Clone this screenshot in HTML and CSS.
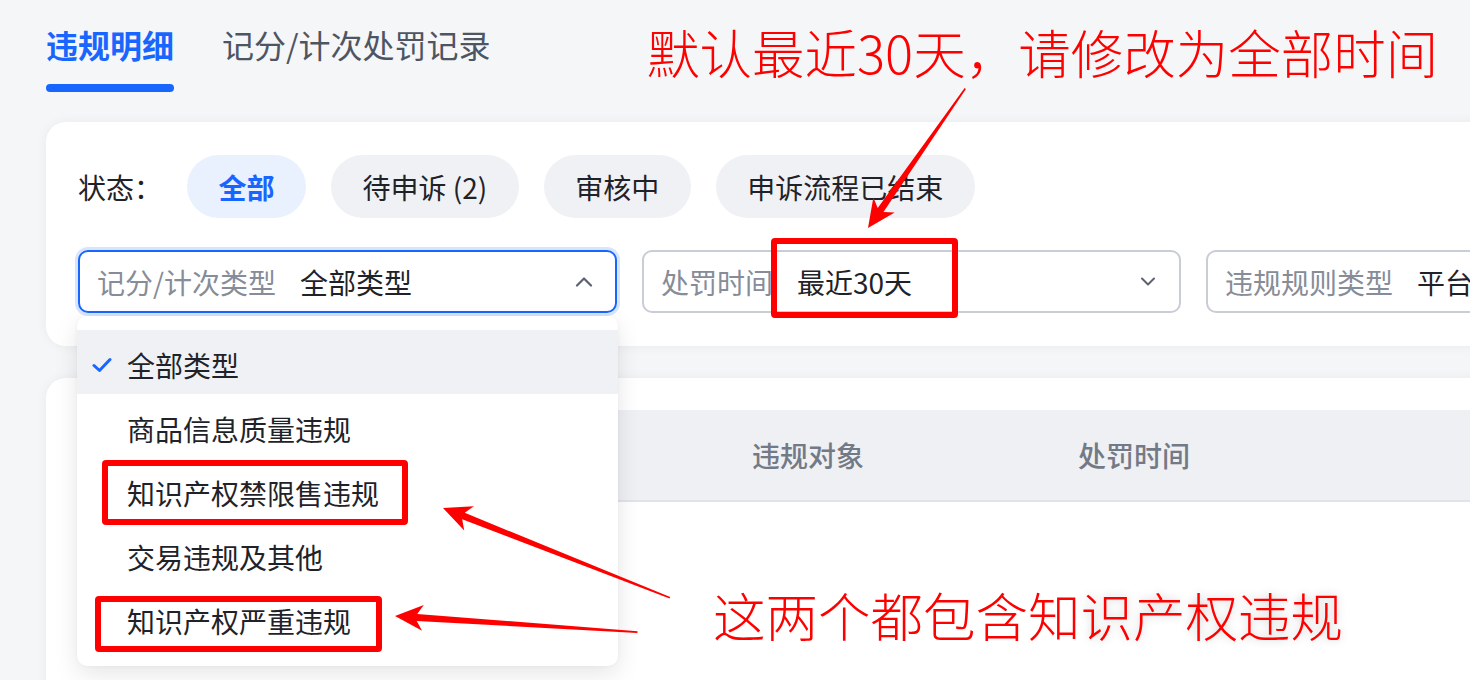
FILE: index.html
```html
<!DOCTYPE html>
<html lang="zh-CN">
<head>
<meta charset="utf-8">
<title>违规明细</title>
<link rel="stylesheet" href="styles.css">
</head>
<body>
<div class="page">
  <nav class="tabs">
    <div class="tab tab-active"><span class="tab-text">违规明细</span><span class="tab-bar"></span></div>
    <div class="tab"><span class="tab-text">记分/计次处罚记录</span></div>
  </nav>

  <section class="card filter-card">
    <div class="status-row">
      <span class="status-label">状态：</span>
      <span class="pill pill-active">全部</span>
      <span class="pill">待申诉 (2)</span>
      <span class="pill">审核中</span>
      <span class="pill">申诉流程已结束</span>
    </div>
    <div class="select-row">
      <div class="select select-open">
        <span class="select-label">记分/计次类型</span>
        <span class="select-value">全部类型</span>
        <svg class="chev" width="18" height="11" viewBox="0 0 18 11"><path d="M2 9.5 L9 2.5 L16 9.5" fill="none" stroke="#5c6270" stroke-width="2.2" stroke-linecap="round" stroke-linejoin="round"/></svg>
        <div class="dropdown">
          <div class="option option-selected"><span class="option-mark"><svg width="20" height="16" viewBox="0 0 20 16"><path d="M2 8.5 L7.5 13.5 L18 2.5" stroke="#1966ff" stroke-width="3" fill="none" stroke-linecap="round" stroke-linejoin="round"/></svg></span>全部类型</div>
          <div class="option"><span class="option-mark"></span>商品信息质量违规</div>
          <div class="option"><span class="option-mark"></span>知识产权禁限售违规</div>
          <div class="option"><span class="option-mark"></span>交易违规及其他</div>
          <div class="option"><span class="option-mark"></span>知识产权严重违规</div>
        </div>
      </div>
      <div class="select">
        <span class="select-label">处罚时间</span>
        <span class="select-value">最近30天</span>
        <svg class="chev" width="18" height="11" viewBox="0 0 18 11"><path d="M3 2.5 L9 8.5 L15 2.5" fill="none" stroke="#5c6270" stroke-width="2" stroke-linecap="round" stroke-linejoin="round"/></svg>
      </div>
      <div class="select">
        <span class="select-label">违规规则类型</span>
        <span class="select-value">平台</span>
      </div>
    </div>
  </section>

  <section class="card table-card">
    <div class="table-head">
      <span class="th"></span>
      <span class="th">违规对象</span>
      <span class="th">处罚时间</span>
    </div>
  </section>

  <div class="annotations">
    <div class="annot annot-top">默认最近30天，请修改为全部时间</div>
    <div class="annot annot-bottom">这两个都包含知<span class="annot-shadow">识产权违规</span></div>
    <div class="mark-box mark-1"></div>
    <div class="mark-box mark-2"></div>
    <div class="mark-box mark-3"></div>
    <svg class="arrows" width="1470" height="680" viewBox="0 0 1470 680">
      <g fill="#ff0000">
        <g transform="translate(868 228) rotate(124.9)"><polygon points="0,0 -28,-13 -22,-3.5 -170,-0.8 -170,0.8 -22,3.5 -28,13"/></g>
        <g transform="translate(443 508) rotate(-158.4)"><polygon points="0,0 -28,-13 -22,-3.5 -244,-0.8 -244,0.8 -22,3.5 -28,13"/></g>
        <g transform="translate(395 616) rotate(-176.2)"><polygon points="0,0 -28,-13 -22,-3.5 -243,-0.8 -243,0.8 -22,3.5 -28,13"/></g>
      </g>
    </svg>
  </div>
</div>
</body>
</html>
```

FILE: styles.css
```css
html, body {
  margin: 0;
  padding: 0;
}

body {
  background: #f5f6f8;
  font-family: "Noto Sans CJK SC", "Noto Sans", sans-serif;
  color: #1f2329;
  width: 1470px;
  height: 680px;
  overflow: hidden;
}

.page {
  position: relative;
  width: 1470px;
  height: 680px;
  overflow: hidden;
}

/* Tabs */
.tabs {
  display: flex;
  gap: 48px;
  padding: 22px 0 0 46px;
}

.tab {
  display: flex;
  flex-direction: column;
}

.tab-text {
  font-size: 32px;
  line-height: 44px;
  color: #4e5562;
  white-space: nowrap;
}

.tab-active .tab-text {
  color: #1966ff;
  font-weight: 700;
}

.tab-bar {
  height: 8px;
  margin-top: 18px;
  border-radius: 4px;
  background: #1966ff;
}

/* Cards */
.card {
  background: #ffffff;
  border-radius: 20px;
  margin-left: 46px;
  width: 1480px;
  box-shadow: 0 0 12px rgba(20, 30, 60, 0.05);
}

.filter-card {
  position: relative;
  z-index: 2;
  margin-top: 30px;
  padding: 33px 0 33px 32px;
  box-sizing: border-box;
}

.status-row {
  display: flex;
  align-items: center;
  gap: 25px;
  height: 63px;
}

.status-label {
  font-size: 28px;
  color: #1f2329;
  white-space: nowrap;
}

.pill {
  display: flex;
  align-items: center;
  height: 63px;
  padding: 0 31.5px;
  border-radius: 32px;
  background: #f0f1f4;
  font-size: 28px;
  color: #1f2329;
  white-space: nowrap;
}

.pill-active {
  background: #e9f1ff;
  color: #1966ff;
  font-weight: 700;
}

.select-row {
  display: flex;
  gap: 25px;
  margin-top: 32px;
}

.select {
  position: relative;
  flex-shrink: 0;
  display: flex;
  align-items: center;
  width: 539px;
  height: 63px;
  box-sizing: border-box;
  padding: 0 22px 0 17px;
  border: 2px solid #c9cdd5;
  border-radius: 10px;
  font-size: 28px;
  white-space: nowrap;
}

.select-open {
  border-color: #1966ff;
  box-shadow: 0 0 0 3px #d8e5ff;
}

.select-label {
  color: #868c98;
}

.select-value {
  margin-left: 24px;
  color: #1f2329;
}

.chev {
  margin-left: auto;
  flex-shrink: 0;
}

/* Dropdown */
.dropdown {
  position: absolute;
  top: 64px;
  left: -3px;
  width: 541px;
  padding: 14px 0 16px;
  background: #ffffff;
  border-radius: 10px;
  box-shadow: 0 8px 24px rgba(0, 0, 0, 0.1), 0 0 4px rgba(0, 0, 0, 0.04);
}

.option {
  display: flex;
  align-items: center;
  height: 64px;
  box-sizing: border-box;
  padding: 5px 0 0 15px;
  font-size: 28px;
  color: #1f2329;
}

.option-selected {
  background: #f0f1f4;
}

.option-mark {
  display: flex;
  align-items: center;
  width: 35px;
  height: 20px;
}

/* Table card */
.table-card {
  margin-top: 32px;
  padding: 32px 0 0 32px;
  height: 400px;
  box-sizing: border-box;
}

.table-head {
  display: grid;
  grid-template-columns: 674px 326px 1fr;
  align-items: center;
  height: 92px;
  box-sizing: border-box;
  background: #eff0f3;
  border-bottom: 2px solid #e1e3e8;
  font-size: 28px;
  font-weight: 500;
  color: #737a87;
}

.th {
  white-space: nowrap;
}

/* Annotation layer */
.annotations {
  position: absolute;
  inset: 0;
  z-index: 10;
  pointer-events: none;
}

.annot {
  position: absolute;
  font-size: 52.5px;
  line-height: 60px;
  font-weight: 300;
  color: #ff0000;
  white-space: nowrap;
}

.annot-top {
  left: 647px;
  top: 21px;
}

.annot-bottom {
  left: 713px;
  top: 584px;
}

.annot-shadow {
  text-shadow: 0 0 10px rgba(0, 0, 0, 0.22);
}

.mark-box {
  position: absolute;
  box-sizing: border-box;
  border: 6px solid #ff0000;
  border-radius: 4px;
}

.mark-1 {
  left: 771px;
  top: 238px;
  width: 187px;
  height: 80px;
}

.mark-2 {
  left: 102px;
  top: 460px;
  width: 306px;
  height: 65px;
}

.mark-3 {
  left: 95px;
  top: 596px;
  width: 287px;
  height: 56px;
}

.arrows {
  position: absolute;
  left: 0;
  top: 0;
}
```
